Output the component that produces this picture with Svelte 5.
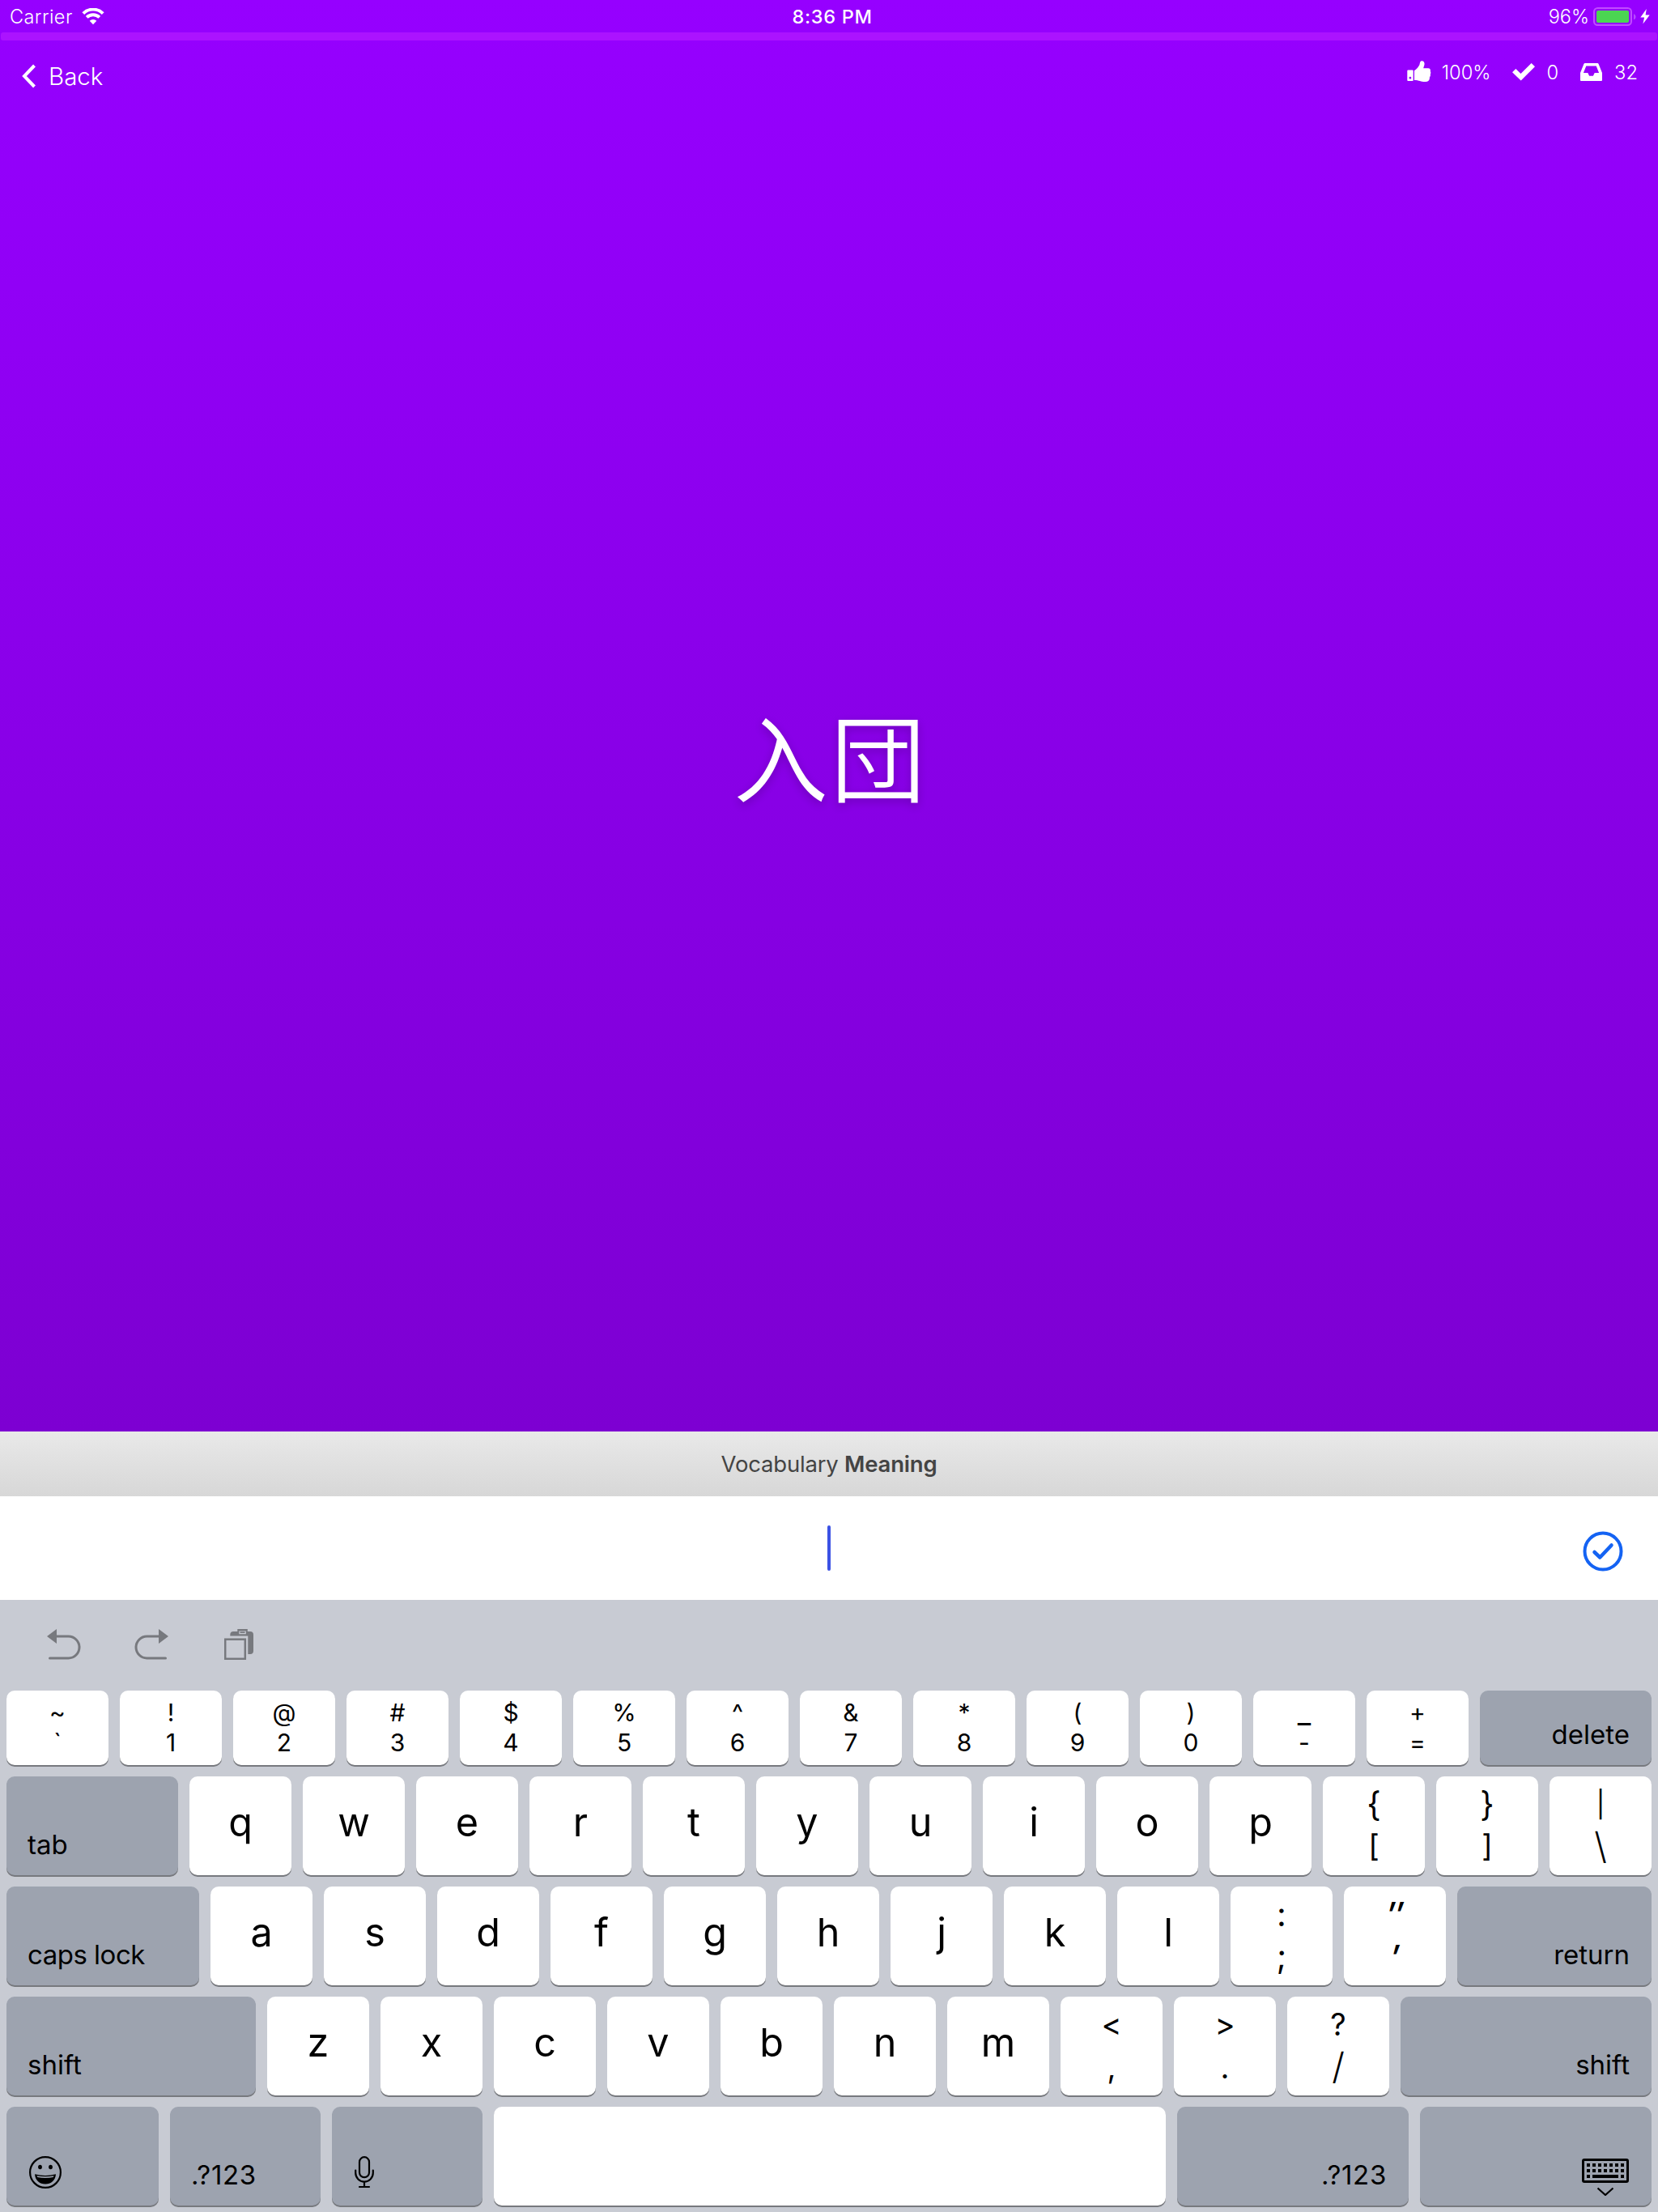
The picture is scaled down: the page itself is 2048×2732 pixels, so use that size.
<script>
  const pair = (s) => s.split(' ').map((p) => ({ top: p[0], bottom: p[1] }));
  const letters = (s) => [...s].map((l) => ({ letter: l }));

  const rows = [
    [...pair('~` !1 @2 #3 $4 %5 ^6 &7 *8 (9 )0 _- +='), { label: 'delete', width: 212, end: true }],
    [{ label: 'tab', width: 212 }, ...letters('qwertyuiop'), ...pair('{[ }] |\\')],
    [
      { label: 'caps lock', width: 238 },
      ...letters('asdfghjkl'),
      ...pair(':; ″′'),
      { label: 'return', width: 240, end: true }
    ],
    [
      { label: 'shift', width: 308 },
      ...letters('zxcvbnm'),
      ...pair('<, >. ?/'),
      { label: 'shift', width: 310, end: true }
    ],
    [
      { icon: 'emoji', width: 188 },
      { label: '.?123', width: 186 },
      { icon: 'mic', width: 186 },
      { space: true, width: 830 },
      { label: '.?123', width: 286, end: true },
      { icon: 'keyboard', width: 286, end: true }
    ]
  ];
  const dots = [0, 1, 2, 3, 4, 5, 6];

  // Symbols that need their own optical size
  const glyphClass = {
    '/': 'slash', '\\': 'slash', '|': 'bar', '_': 'under',
    '″': 'prime', '′': 'prime', '[': 'square', ']': 'square',
    '{': 'dots', '}': 'dots', ':': 'dots', ';': 'dots'
  };
</script>

<div class="screen">
  <section class="question">
    <div class="status">
      <div class="status-side">
        <span class="carrier">Carrier</span>
        <svg class="wifi" width="28" height="21" viewBox="0 0 28 21">
          <path d="M1.8 6.6a17.4 17.4 0 0 1 24.4 0" />
          <path d="M6.2 11.4a11.2 11.2 0 0 1 15.6 0" />
          <path class="fill" d="M14 20.3l-4.3-4.5a6.2 6.2 0 0 1 8.6 0z" />
        </svg>
      </div>
      <span class="time">8:36 PM</span>
      <div class="status-side right">
        <span class="battery-text">96%</span>
        <svg class="battery" width="54" height="24" viewBox="0 0 54 24">
          <rect class="shell" x="1" y="1" width="46" height="21" rx="4.5" />
          <rect class="charge" x="4" y="4" width="40" height="15" rx="2" />
          <path class="nub" d="M50 8.2c3.4 1 3.4 6 0 7z" />
        </svg>
        <svg class="bolt" width="12" height="19" viewBox="0 0 12 19">
          <path d="M7.8 0L.3 10.4h4.8L3.4 18.6 11.7 7.6H6.6z" />
        </svg>
      </div>
    </div>
    <div class="progress"></div>
    <div class="nav">
      <div class="back">
        <svg width="18" height="30" viewBox="0 0 18 30">
          <path d="M15.5 2L3 15l12.500 13" />
        </svg>
        <span>Back</span>
      </div>
      <div class="stats">
        <svg class="thumb" width="30" height="28" viewBox="0 0 30 28">
          <path fill-rule="evenodd" d="M1.300 11.500h5.400q1 0 1 1v11.500q0 1-1 1H1.300q-1 0-1-1V12.500q0-1 1-1zM3.900 19.800a1.400 1.400 0 1 0 .01 2.800a1.400 1.400 0 0 0 -.01-2.800z" />
          <path d="M9 12.300c2.800-1.600 5.200-5 6.300-7 .7-1.800.5-4.600 2.500-5.100 2.600-.4 4 1.800 3.700 4.300-.2 1.800-1 3-1.300 4.700h6c2.200 0 3.300 2 2.500 3.900.8 1.100.8 2.500 0 3.500.5 1.300 0 2.800-.8 3.600.3 3.800-1.600 5.600-5.200 5.800-5 .3-7.500-1.900-13.700-2z" />
        </svg>
        <span class="percent">100%</span>
        <svg class="tick" width="28" height="22" viewBox="0 0 28 22">
          <path d="M0 11.300l4.300-4.300 6.200 6L23.600 0 28 4.300 10.700 21.500z" />
        </svg>
        <span class="done">0</span>
        <svg class="inbox" width="27" height="22" viewBox="0 0 27 22">
          <path fill-rule="evenodd" d="M5.800 0h15.400q1 0 1.400 1L27 12v9q0 1-1 1H1q-1 0-1-1v-9L4.400 1q.4-1 1.400-1zM7.300 3.500L3.900 12h5.400l1.800 3.700h4.800l1.800-3.700h5.400L19.700 3.500z" />
        </svg>
        <span class="left">32</span>
      </div>
    </div>
    <div class="word">入団</div>
  </section>

  <div class="prompt"><span>Vocabulary <b>Meaning</b></span></div>

  <div class="answer">
    <span class="side"></span>
    <span class="caret"></span>
    <span class="side">
      <svg width="50" height="50" viewBox="0 0 50 50">
        <circle cx="25" cy="25" r="22.500" />
        <path d="M14.500 26l6.800 6.500L35.500 17.500" />
      </svg>
    </span>
  </div>

  <div class="keyboard">
    <div class="tools">
      <svg width="42" height="38" viewBox="0 0 42 38">
        <path class="line" d="M10 9h16.500a13.500 13.500 0 0 1 0 27H3.500" />
        <path d="M0 9L12 0v18z" />
      </svg>
      <svg width="42" height="38" viewBox="0 0 42 38">
        <path class="line" d="M32 9H15.500a13.500 13.500 0 0 0 0 27H38.500" />
        <path d="M42 9L30 0v18z" />
      </svg>
      <svg width="36" height="38" viewBox="0 0 36 38">
        <rect class="box" x="1.200" y="12.700" width="24.600" height="24.100" />
        <path fill-rule="evenodd" d="M7.300 8.500V7q0-4 4-4h5V0h12.500v3H32q4 0 4 4v20q0 4-4 4h-2.700V8.500zM18.300 2.500v3.800h8.500V2.500z" />
        <path d="M19.500 3.300h6v1.700h-6z" />
      </svg>
    </div>

    {#each rows as row, i}
      <div class="row" class:short={i === 0}>
        {#each row as key}
          {#if key.letter}
            <div class="key letter">{key.letter}</div>
          {:else if key.top}
            <div class="key pair">
              <span class={glyphClass[key.top]}>{key.top}</span>
              <span class={glyphClass[key.bottom]}>{key.bottom}</span>
            </div>
          {:else if key.space}
            <div class="key" style:width="{key.width}px"></div>
          {:else}
            <div class="key dark" class:end={key.end} style:width="{key.width}px">
              {#if key.icon === 'emoji'}
                <svg class="emoji" width="40" height="40" viewBox="0 0 40 40">
                  <circle class="ring" cx="20" cy="20" r="18.900" />
                  <ellipse cx="13.500" cy="13.500" rx="2.400" ry="2.700" />
                  <ellipse cx="26.500" cy="13.500" rx="2.400" ry="2.700" />
                  <path fill-rule="evenodd" d="M7 22.200q13 3.400 26 0C32.500 30 27 34.500 20 34.500S7.500 30 7 22.200zM9.500 24.300q.3 1 .8 1.800 9.700 2 19.400 0 .5-.8.8-1.800-10.500 2-21 0z" />
                </svg>
              {:else if key.icon === 'mic'}
                <svg class="mic" width="24" height="40" viewBox="0 0 24 40">
                  <rect x="6" y="1.200" width="12" height="25" rx="6" />
                  <path d="M1.200 17.500v3.300a10.800 10.800 0 0 0 21.600 0v-3.300M12 31.600v6.400M6 38h12" />
                </svg>
              {:else if key.icon === 'keyboard'}
                <svg class="hide" width="58" height="46" viewBox="0 0 58 46">
                  <rect class="case" x="1.500" y="1.500" width="55" height="27" rx="1.500" />
                  {#each dots as d}
                    <rect x={6 + d * 7} y="6" width="4" height="4" />
                    <rect x={6 + d * 7} y="13" width="4" height="4" />
                  {/each}
                  <rect x="6" y="20" width="4" height="4" />
                  <rect x="13" y="20" width="32" height="4" />
                  <rect x="48" y="20" width="4" height="4" />
                  <path class="chevron" d="M19.500 36.500l9.500 8.500 9.500-8.500" />
                </svg>
              {:else}
                <span class:numeric={key.label === '.?123'} class:caps={key.label === 'caps lock'}>{key.label}</span>
              {/if}
            </div>
          {/if}
        {/each}
      </div>
    {/each}
  </div>
</div>

<style>
  :global(body) { margin: 0; }
  .screen {
    width: 2048px;
    height: 2732px;
    display: flex;
    flex-direction: column;
    overflow: hidden;
    font-family: Inter, 'Liberation Sans', sans-serif;
    color: #000;
  }
  svg { display: block; flex: none; }
  .question {
    height: 1768px;
    display: flex;
    flex-direction: column;
    color: #fff;
    background: linear-gradient(#9600ff, #7d00d2);
  }
  .status {
    height: 40px;
    display: flex;
    align-items: center;
    font-size: 23.500px;
    line-height: 38px;
  }
  .status span { padding-top: 2px; }
  .status-side { flex: 1; display: flex; align-items: center; padding-left: 12px; }
  .status-side.right { justify-content: flex-end; padding: 0 10px 0 0; }
  .carrier { font-weight: 300; letter-spacing: 0.4px; }
  .wifi { margin-left: 11px; }
  .wifi path { fill: none; stroke: #fff; stroke-width: 4; }
  .wifi .fill { fill: #fff; stroke: none; }
  .time { font-weight: 500; letter-spacing: 0.7px; margin: 0 -3px 0 3px; }
  .battery-text { font-weight: 300; }
  .battery { margin-left: 5px; margin-top: 2px; }
  .shell { fill: none; stroke: #c14bff; stroke-width: 2; }
  .charge { fill: #4bd552; }
  .nub { fill: #b64aff; }
  .bolt { margin-left: 4px; }
  .bolt path { fill: #fff; }
  .progress { height: 10px; margin: 0 1px; border-radius: 3px; background: #ab13ff; }
  .nav { height: 90px; display: flex; justify-content: space-between; }
  .back { display: flex; align-items: center; height: 88px; padding-left: 27px; font-size: 29.500px; font-weight: 300; }
  .back span { margin-left: 15px; }
  .back path { fill: none; stroke: #fff; stroke-width: 4; }
  .stats { display: flex; align-items: center; height: 78px; padding-right: 25px; font-size: 23.700px; font-weight: 300; }
  .stats path { fill: #fff; }
  .percent { margin: 0 27px 0 13px; }
  .done { margin: 0 27px 0 14px; }
  .left { margin-left: 15px; }
  .word {
    flex: 1;
    display: flex;
    justify-content: center;
    padding: 704px 0 0 4px;
    font-family: 'Noto Sans CJK SC', sans-serif;
    font-size: 117px;
    letter-spacing: 3px;
    font-weight: 350;
    line-height: 174px;
    text-shadow: 0 4px 12px rgba(0, 0, 0, 0.2);
  }
  .prompt {
    height: 80px;
    display: flex;
    align-items: center;
    justify-content: center;
    font-size: 27.500px;
    letter-spacing: -0.2px;
    color: #444;
    background: linear-gradient(#e9e9e9, #d7d7d7);
  }
  .prompt b { font-weight: 600; }
  .answer { height: 128px; display: flex; align-items: center; background: #fff; }
  .side { flex: 1; display: flex; justify-content: flex-end; padding: 7px 43px 0 0; }
  .side circle, .side path { fill: none; stroke: #1463f3; stroke-width: 4; }
  .side path { stroke-width: 4.500; stroke-linecap: round; stroke-linejoin: round; }
  .caret { width: 4px; height: 56px; border-radius: 2px; background: #3b52e4; }
  .keyboard {
    flex: 1;
    display: flex;
    flex-direction: column;
    gap: 14px;
    padding: 0 8px;
    background: #c8cbd3;
  }
  .tools { height: 62px; display: flex; gap: 66px; padding: 36px 0 0 50px; }
  .tools svg:nth-child(3) { margin-left: 3px; }
  .tools path { fill: #77797e; }
  .tools .line, .tools .box { fill: none; stroke: #77797e; stroke-width: 3; stroke-linecap: round; }
  .tools .box { stroke-width: 2.500; }
  .row { display: flex; gap: 14px; height: 122px; }
  .row.short { height: 92px; }
  .key {
    width: 126px;
    flex: none;
    box-sizing: border-box;
    border-radius: 10px;
    background: #fff;
    box-shadow: 0 2px 0 #77797e;
    text-align: center;
  }
  .letter { font-size: 48.500px; line-height: 113px; }
  .pair { display: flex; flex-direction: column; font-size: 38px; line-height: 53px; padding-top: 8px; }
  .short .pair { font-size: 30px; line-height: 37px; padding-top: 9px; }
  .pair .slash { font-size: 45px; font-weight: 300; line-height: 50px; }
  .pair .bar { font-size: 32px; }
  .pair .square { font-size: 37px; line-height: 51px; }
  .pair .dots { font-size: 41px; line-height: 52px; }
  .pair .prime { font-size: 43px; font-weight: 500; font-style: italic; }
  .pair .under { font-size: 36px; }
  .dark {
    display: flex;
    align-items: flex-end;
    padding: 0 27px 18px 26px;
    background: #9da3af;
    font-size: 33px;
    line-height: 40px;
  }
  .dark.end { justify-content: flex-end; }
  .numeric { letter-spacing: 0.7px; }
  .caps { letter-spacing: -0.5px; }
  .emoji { margin: 0 0 3px 2px; }
  .ring, .mic rect, .mic path, .case, .chevron { fill: none; stroke: #000; stroke-width: 2.200; }
  .mic { margin: 0 0 3px 2px; }
  .mic path { stroke-linecap: round; }
  .hide { margin: 0 1px -6px 0; }
  .case { stroke-width: 3; }
</style>
